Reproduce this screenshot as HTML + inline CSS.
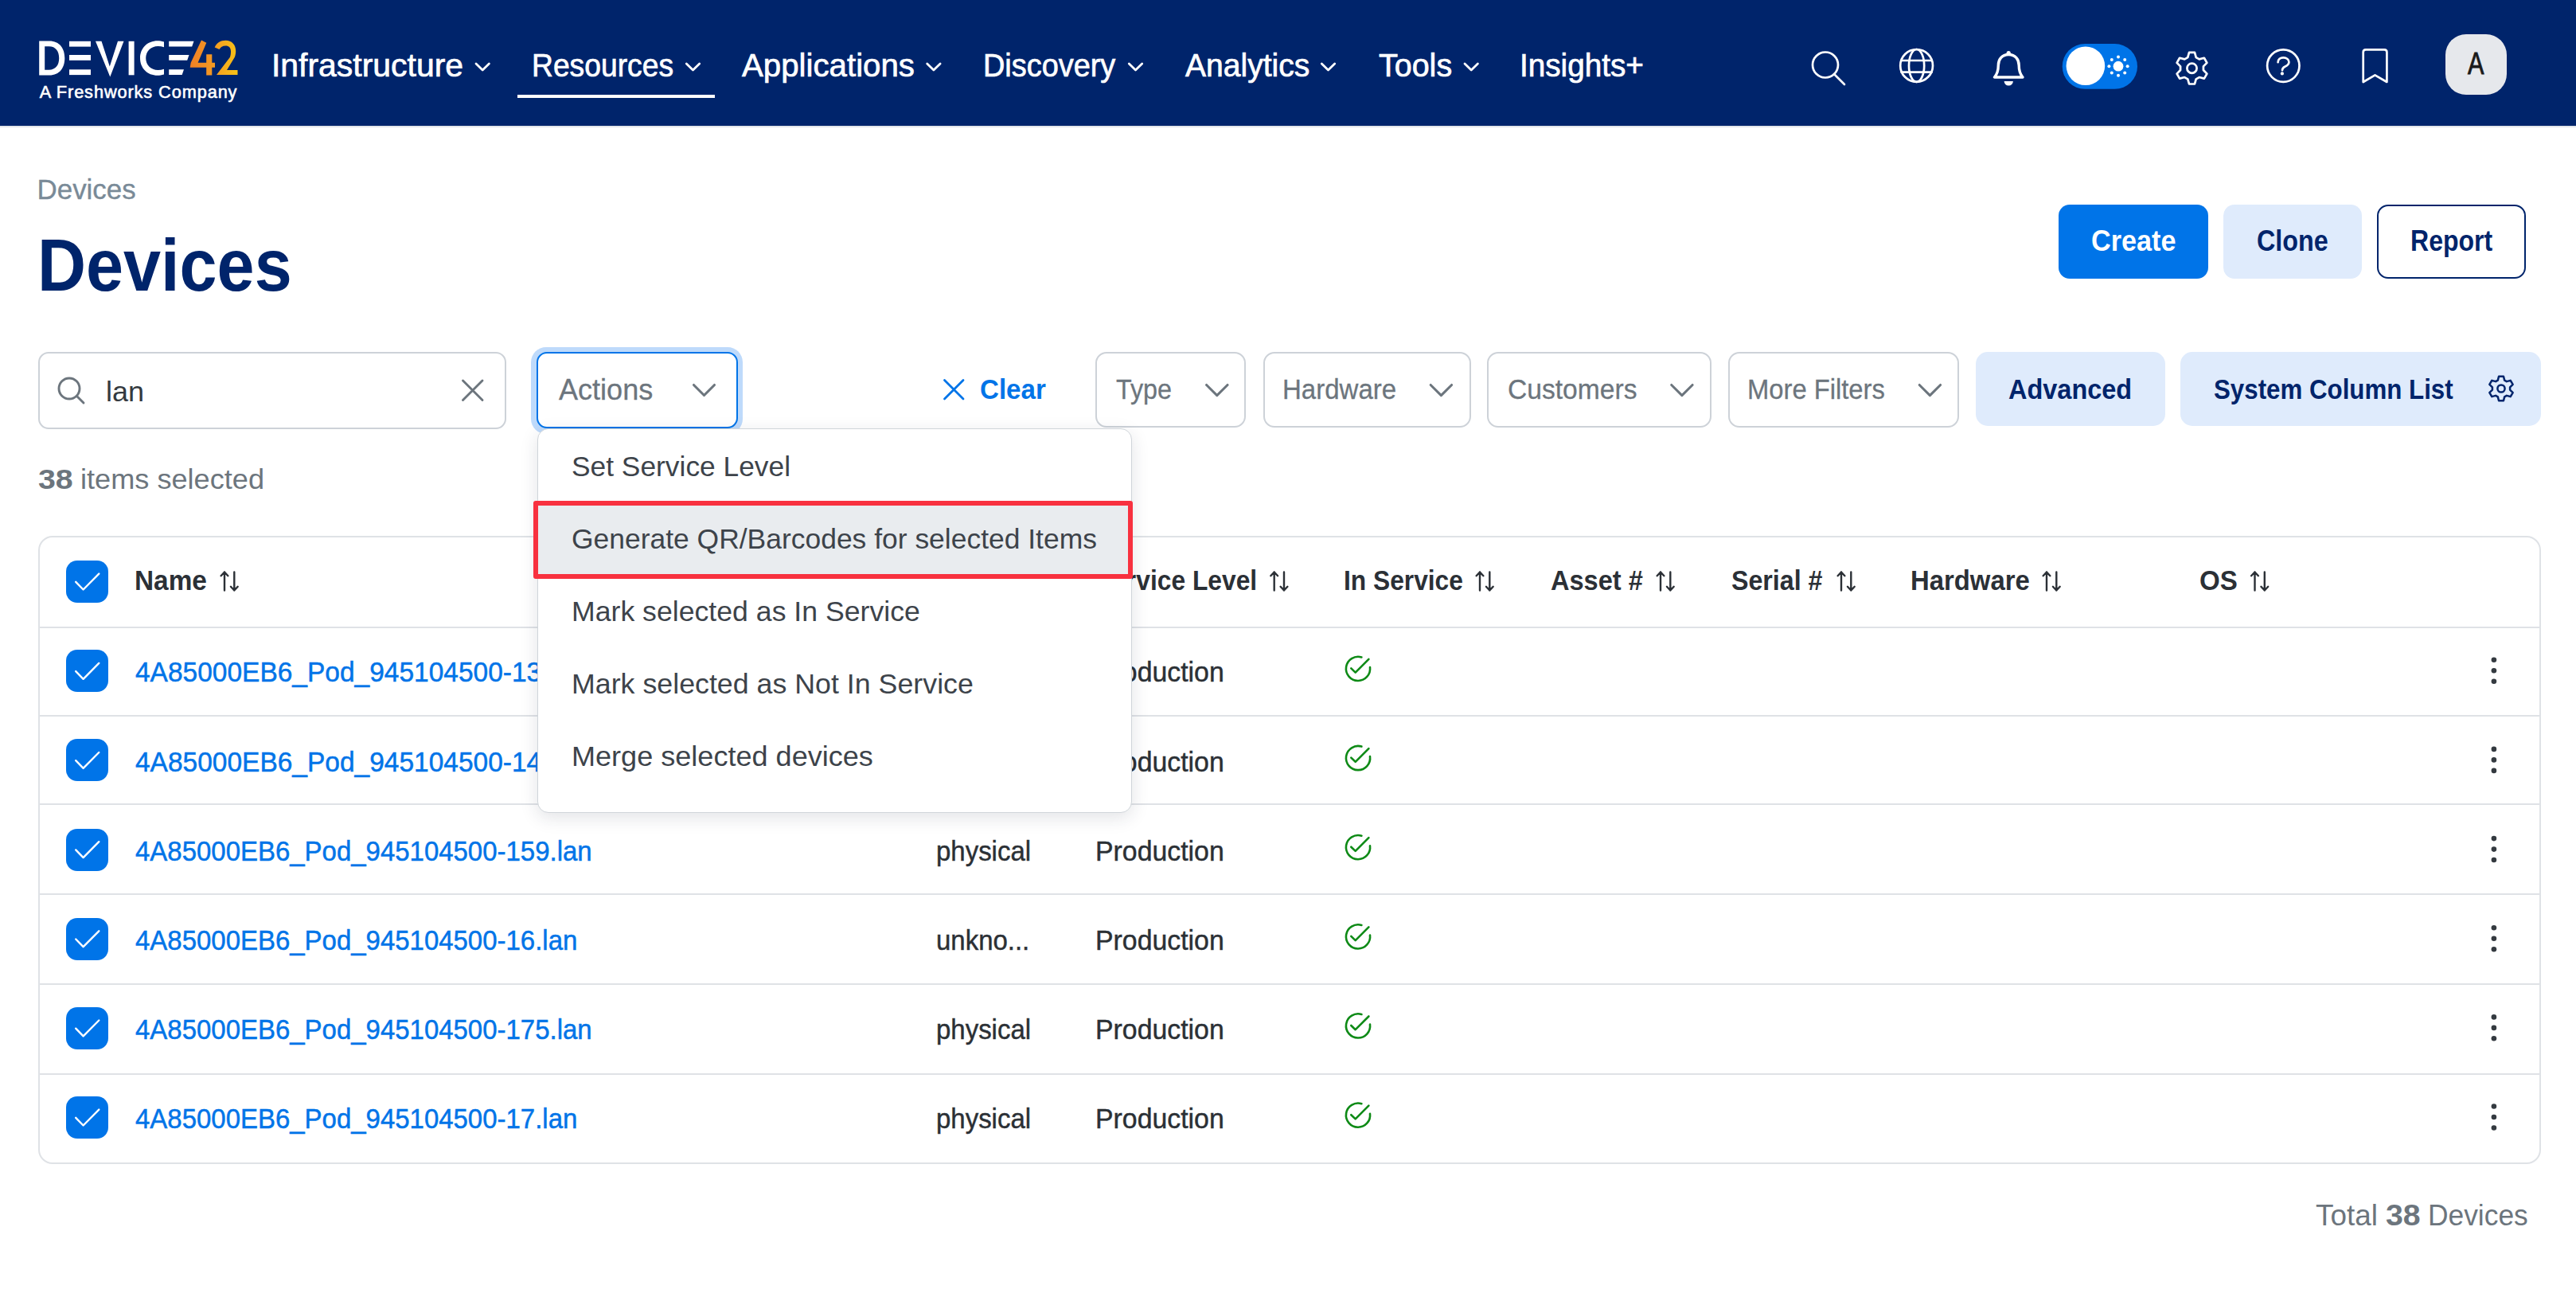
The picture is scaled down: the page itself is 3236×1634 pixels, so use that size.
<!DOCTYPE html><html><head><meta charset="utf-8"><style>
html,body{margin:0;padding:0;}
body{width:3236px;height:1634px;overflow:hidden;background:#fff;position:relative;font-family:"Liberation Sans",sans-serif;}
.t{position:absolute;white-space:nowrap;line-height:1;transform-origin:0 0;}
.abs{position:absolute;box-sizing:border-box;}
svg{position:absolute;left:0;top:0;overflow:visible}
</style></head><body>
<div class="abs" style="left:0;top:0;width:3236px;height:158px;background:#00246B"></div>
<div class="abs" style="left:0;top:158px;width:3236px;height:2px;background:#E3E6EA"></div>
<svg width="3236" height="160" viewBox="0 0 3236 160">
<defs><linearGradient id="lg42" x1="238" y1="0" x2="299" y2="0" gradientUnits="userSpaceOnUse"><stop offset="0" stop-color="#F07F26"/><stop offset="0.5" stop-color="#F49A22"/><stop offset="1" stop-color="#F8C316"/></linearGradient></defs>
<g fill="#fff">
<path d="M49.2,51.5 H62 C75,51.5 81.3,61 81.3,73 C81.3,85 75,94.5 62,94.5 H49.2 Z M56.2,58.3 V87.7 H61.5 C70,87.7 74.2,81.5 74.2,73 C74.2,64.5 70,58.3 61.5,58.3 Z" fill-rule="evenodd"/>
<rect x="87" y="51.8" width="27" height="6.8"/><rect x="87" y="69" width="27" height="6.8"/><rect x="87" y="87.3" width="27" height="6.8"/>
<path d="M120,51.8 H127.5 L137.8,83.5 L148,51.8 H155.5 L138.3,96.5 Z"/>
<rect x="161.6" y="51.8" width="7" height="42.5"/>
<path d="M206,52.5 C203,51.6 200.5,51.2 198,51.2 C185,51.2 176,60.5 176,73 C176,85.5 185,94.8 198,94.8 C200.5,94.8 203,94.4 206,93.5 V86.8 C203.5,87.6 201,88 198.5,88 C189.5,88 183.2,81.5 183.2,73 C183.2,64.5 189.5,58 198.5,58 C201,58 203.5,58.4 206,59.2 Z"/>
<path d="M212.2,51.8 H243.5 L241.2,58.6 H212.2 Z"/><path d="M212.2,69 H237.5 L235.2,75.8 H212.2 Z"/><path d="M212.2,87.3 H231 L228.7,94.1 H212.2 Z"/>
</g>
<path fill="url(#lg42)" d="M253,50.5 L259.3,53.7 L248.6,78.8 H259.2 V68.3 H266.3 V78.8 H270 V84.7 H266.3 V94.6 H259.2 V84.7 H238.7 L239.7,78.8 Z"/>
<path fill="url(#lg42)" d="M269.7,59.4 C272,54 277,50.7 283.5,50.7 C291,50.7 296.2,56 296.2,64 C296.2,67.5 295.5,70 294.7,72 L285,88.1 H298.5 V94 H272 L288.8,72 C289.6,70 290,67.5 290,64.5 C290,60 287.5,57.5 283.5,57.5 C279.5,57.5 277,59.5 275.5,62 Z"/>
</svg>
<span class="t" style="left:49.7px;top:105.1px;font-size:21.74px;font-weight:400;color:#fff;-webkit-text-stroke:0.6px #fff;letter-spacing:0.9px;">A Freshworks Company</span>
<span class="t" style="left:341.2px;top:62.1px;font-size:40.58px;font-weight:400;color:#fff;transform:scaleX(1.0083);-webkit-text-stroke:0.7px #fff;">Infrastructure</span>
<span class="t" style="left:668.1px;top:62.1px;font-size:40.58px;font-weight:400;color:#fff;transform:scaleX(0.9180);-webkit-text-stroke:0.7px #fff;">Resources</span>
<span class="t" style="left:931.5px;top:62.1px;font-size:40.58px;font-weight:400;color:#fff;transform:scaleX(0.9915);-webkit-text-stroke:0.7px #fff;">Applications</span>
<span class="t" style="left:1234.8px;top:62.1px;font-size:40.58px;font-weight:400;color:#fff;transform:scaleX(0.9334);-webkit-text-stroke:0.7px #fff;">Discovery</span>
<span class="t" style="left:1489.2px;top:62.1px;font-size:40.58px;font-weight:400;color:#fff;transform:scaleX(0.9627);-webkit-text-stroke:0.7px #fff;">Analytics</span>
<span class="t" style="left:1731.8px;top:62.1px;font-size:40.58px;font-weight:400;color:#fff;transform:scaleX(0.9723);-webkit-text-stroke:0.7px #fff;">Tools</span>
<span class="t" style="left:1909.4px;top:62.1px;font-size:40.58px;font-weight:400;color:#fff;transform:scaleX(0.9534);-webkit-text-stroke:0.7px #fff;">Insights+</span>
<svg width="3236" height="160"><g fill="none" stroke="#fff" stroke-width="2.8" stroke-linecap="round" stroke-linejoin="round"><path d="M598.0,80 L606.2,88 L614.4,80"/><path d="M862.3,80 L870.5,88 L878.7,80"/><path d="M1164.7,80 L1172.9,88 L1181.1,80"/><path d="M1418.3,80 L1426.5,88 L1434.7,80"/><path d="M1660.3,80 L1668.5,88 L1676.7,80"/><path d="M1840.0,80 L1848.2,88 L1856.4,80"/></g></svg>
<div class="abs" style="left:650px;top:119px;width:248px;height:4px;background:#fff"></div>
<svg width="3236" height="160"><g fill="none" stroke="#fff" stroke-width="2.7" stroke-linecap="round" stroke-linejoin="round">
<circle cx="2293" cy="81.5" r="16"/><path d="M2305,94 L2317,106"/>
<circle cx="2407.6" cy="82.4" r="20.4"/><ellipse cx="2407.6" cy="82.4" rx="9.6" ry="20.4"/><path d="M2388.5,76 H2426.7 M2388.5,90.6 H2426.7"/>
<path stroke-width="3.4" d="M2523.2,68.5 C2514.5,68.5 2510.3,75 2510.3,82 C2510.3,89 2508.5,93.5 2505.5,97 H2541 C2538,93.5 2536.2,89 2536.2,82 C2536.2,75 2532,68.5 2523.2,68.5 Z"/>
<path d="M2748.27,72.07 L2750.01,65.91 L2756.99,65.91 L2758.73,72.07 L2762.69,74.35 L2768.90,72.78 L2772.39,78.83 L2767.92,83.42 L2767.92,87.98 L2772.39,92.57 L2768.90,98.62 L2762.69,97.05 L2758.73,99.33 L2756.99,105.49 L2750.01,105.49 L2748.27,99.33 L2744.31,97.05 L2738.10,98.62 L2734.61,92.57 L2739.08,87.98 L2739.08,83.42 L2734.61,78.83 L2738.10,72.78 L2744.31,74.35 Z"/>
<circle cx="2753.5" cy="85.7" r="6.1"/>
<circle cx="2868.3" cy="82.6" r="20.2"/>
<path d="M2861.6,78.2 C2861.6,74.6 2864.6,72.3 2868.4,72.3 C2872.4,72.3 2875.4,74.8 2875.4,78 C2875.4,81.3 2872.8,82.6 2870.3,83.8 C2868,84.9 2867,86 2867,88.2"/>
<path d="M2968.7,65.5 Q2968.7,62.3 2971.9,62.3 H2995.2 Q2998.4,62.3 2998.4,65.5 V103 L2983.5,94.3 L2968.7,103 Z"/>
</g>
<g fill="#fff"><circle cx="2866.9" cy="92.4" r="2.1"/><circle cx="2523.2" cy="66.5" r="2.6"/><path d="M2517.6,102 H2528.9 A5.65,5.6 0 0 1 2517.6,102 Z"/></g>
<rect x="2590.7" y="55" width="94.3" height="56.8" rx="28.4" fill="#0074E8"/>
<circle cx="2619.9" cy="82.8" r="24.3" fill="#fff"/>
<g fill="#fff"><circle cx="2661" cy="83.2" r="6.4"/><circle cx="2672.60" cy="83.20" r="2"/><circle cx="2669.20" cy="91.40" r="2"/><circle cx="2661.00" cy="94.80" r="2"/><circle cx="2652.80" cy="91.40" r="2"/><circle cx="2649.40" cy="83.20" r="2"/><circle cx="2652.80" cy="75.00" r="2"/><circle cx="2661.00" cy="71.60" r="2"/><circle cx="2669.20" cy="75.00" r="2"/></g>
</svg>
<div class="abs" style="left:3072px;top:43px;width:77px;height:76px;border-radius:26px;background:#E6E8EC"></div>
<span class="t" style="left:3099.9px;top:60.3px;font-size:39.13px;font-weight:400;color:#1A1A1A;transform:scaleX(0.7822);-webkit-text-stroke:0.9px #1A1A1A;">A</span>
<span class="t" style="left:46.5px;top:220.5px;font-size:34.93px;font-weight:400;color:#798A97;-webkit-text-stroke:0.35px #798A97;">Devices</span>
<span class="t" style="left:47.4px;top:286.8px;font-size:92.32px;font-weight:700;color:#00246B;transform:scaleX(0.9159);">Devices</span>
<div class="abs" style="left:2586px;top:257px;width:188px;height:93px;border-radius:14px;background:#0074E8"></div>
<div class="abs" style="left:2793px;top:257px;width:174px;height:93px;border-radius:14px;background:#DFEBFC"></div>
<div class="abs" style="left:2986px;top:257px;width:187px;height:93px;border-radius:14px;border:2.6px solid #00246B;background:#fff"></div>
<span class="t" style="left:2626.6px;top:284.8px;font-size:36.23px;font-weight:700;color:#fff;transform:scaleX(0.9442);">Create</span>
<span class="t" style="left:2835.3px;top:284.8px;font-size:36.23px;font-weight:700;color:#00246B;transform:scaleX(0.8912);">Clone</span>
<span class="t" style="left:3027.7px;top:284.8px;font-size:36.23px;font-weight:700;color:#00246B;transform:scaleX(0.8842);">Report</span>
<div class="abs" style="left:48px;top:442px;width:588px;height:97px;border-radius:13px;border:2px solid #CDD2D8;background:#fff"></div>
<svg width="3236" height="600"><g fill="none" stroke="#6C757D" stroke-width="2.9" stroke-linecap="round"><circle cx="87" cy="488" r="13"/><path d="M96.5,497.5 L105,506"/><path d="M581.5,478 L606,502.5 M606,478 L581.5,502.5"/></g></svg>
<span class="t" style="left:132.6px;top:474.8px;font-size:34.18px;font-weight:400;color:#343A40;transform:scaleX(1.0552);">lan</span>
<div class="abs" style="left:667px;top:436px;width:266px;height:109px;border-radius:19px;background:#BEDAFB"></div>
<div class="abs" style="left:674px;top:442px;width:253px;height:96px;border-radius:13px;border:2.2px solid #0074E8;background:#fff"></div>
<span class="t" style="left:701.7px;top:471.8px;font-size:36.23px;font-weight:400;color:#6C757D;transform:scaleX(0.9958);-webkit-text-stroke:0.3px #6C757D;">Actions</span>
<span class="t" style="left:1230.7px;top:472.0px;font-size:34.78px;font-weight:700;color:#0074E8;transform:scaleX(0.9518);">Clear</span>
<div class="abs" style="left:1376px;top:442px;width:189.0px;height:95px;border-radius:14px;border:2px solid #CDD2D8;background:#fff"></div>
<span class="t" style="left:1402.2px;top:472.4px;font-size:35.51px;font-weight:400;color:#6C757D;transform:scaleX(0.9105);-webkit-text-stroke:0.3px #6C757D;">Type</span>
<div class="abs" style="left:1587px;top:442px;width:261.0px;height:95px;border-radius:14px;border:2px solid #CDD2D8;background:#fff"></div>
<span class="t" style="left:1611.2px;top:472.4px;font-size:35.51px;font-weight:400;color:#6C757D;transform:scaleX(0.9299);-webkit-text-stroke:0.3px #6C757D;">Hardware</span>
<div class="abs" style="left:1868px;top:442px;width:282.0px;height:95px;border-radius:14px;border:2px solid #CDD2D8;background:#fff"></div>
<span class="t" style="left:1894.3px;top:472.4px;font-size:35.51px;font-weight:400;color:#6C757D;transform:scaleX(0.9464);-webkit-text-stroke:0.3px #6C757D;">Customers</span>
<div class="abs" style="left:2170.6px;top:442px;width:290.4px;height:95px;border-radius:14px;border:2px solid #CDD2D8;background:#fff"></div>
<span class="t" style="left:2195.3px;top:472.4px;font-size:35.51px;font-weight:400;color:#6C757D;transform:scaleX(0.9224);-webkit-text-stroke:0.3px #6C757D;">More Filters</span>
<svg width="3236" height="600"><g fill="none" stroke="#6C757D" stroke-width="3.1" stroke-linecap="round" stroke-linejoin="round"><path d="M871.5,483.5 L884.5,496.5 L897.5,483.5"/><path d="M1515.6,483.5 L1528.8,496.7 L1542.0,483.5"/><path d="M1797.2,483.5 L1810.4,496.7 L1823.6,483.5"/><path d="M2099.7,483.5 L2112.9,496.7 L2126.1,483.5"/><path d="M2411.2,483.5 L2424.4,496.7 L2437.6,483.5"/></g><g fill="none" stroke="#0074E8" stroke-width="2.8" stroke-linecap="round"><path d="M1186.5,477.5 L1210,501 M1210,477.5 L1186.5,501"/></g></svg>
<div class="abs" style="left:2482px;top:442px;width:238px;height:93px;border-radius:15px;background:#DFEBFC"></div>
<div class="abs" style="left:2739px;top:442px;width:453px;height:93px;border-radius:15px;background:#DFEBFC"></div>
<span class="t" style="left:2523.1px;top:471.6px;font-size:35.80px;font-weight:700;color:#00246B;transform:scaleX(0.9072);">Advanced</span>
<span class="t" style="left:2780.8px;top:471.6px;font-size:35.80px;font-weight:700;color:#00246B;transform:scaleX(0.8737);">System Column List</span>
<svg width="3236" height="600"><g fill="none" stroke="#00246B" stroke-width="2.5" stroke-linejoin="round"><path d="M3137.80,477.62 L3139.04,472.78 L3144.96,472.78 L3146.20,477.62 L3148.90,479.17 L3153.70,477.83 L3156.66,482.95 L3153.09,486.44 L3153.09,489.56 L3156.66,493.05 L3153.70,498.17 L3148.90,496.83 L3146.20,498.38 L3144.96,503.22 L3139.04,503.22 L3137.80,498.38 L3135.10,496.83 L3130.30,498.17 L3127.34,493.05 L3130.91,489.56 L3130.91,486.44 L3127.34,482.95 L3130.30,477.83 L3135.10,479.17 Z"/><circle cx="3142" cy="488" r="4.6"/></g></svg>
<span class="t" style="left:48.1px;top:583.8px;font-size:35.94px;font-weight:700;color:#6C757D;transform:scaleX(1.0945);">38</span>
<span class="t" style="left:101.1px;top:583.8px;font-size:35.94px;font-weight:400;color:#6C757D;transform:scaleX(1.0061);">items selected</span>
<div class="abs" style="left:48px;top:673px;width:3143.5px;height:789px;border-radius:18px;border:2px solid #DFE2E6;background:#fff"></div>
<div class="abs" style="left:50px;top:786.6px;width:3139.5px;height:2px;background:#DFE2E6"></div>
<div class="abs" style="left:50px;top:897.8px;width:3139.5px;height:2px;background:#DFE2E6"></div>
<div class="abs" style="left:50px;top:1009.4px;width:3139.5px;height:2px;background:#DFE2E6"></div>
<div class="abs" style="left:50px;top:1122.4px;width:3139.5px;height:2px;background:#DFE2E6"></div>
<div class="abs" style="left:50px;top:1234.6px;width:3139.5px;height:2px;background:#DFE2E6"></div>
<div class="abs" style="left:50px;top:1347.5px;width:3139.5px;height:2px;background:#DFE2E6"></div>
<div class="abs" style="left:83px;top:704.0px;width:53px;height:53px;border-radius:14px;background:#0074E8"></div>
<svg width="3236" height="1634"><path d="M95.2,730.8 L104.6,740.5 L124.3,720.6" fill="none" stroke="#fff" stroke-width="2.4" stroke-linecap="round" stroke-linejoin="round"/></svg>
<span class="t" style="left:168.8px;top:712.4px;font-size:35.51px;font-weight:700;color:#2B3036;transform:scaleX(0.9404);">Name</span>
<span class="t" style="left:1177.7px;top:712.4px;font-size:35.51px;font-weight:700;color:#2B3036;transform:scaleX(0.8800);">Type</span>
<span class="t" style="left:1376.0px;top:712.4px;font-size:35.51px;font-weight:700;color:#2B3036;transform:scaleX(0.8950);">Service Level</span>
<span class="t" style="left:1687.9px;top:712.4px;font-size:35.51px;font-weight:700;color:#2B3036;transform:scaleX(0.8936);">In Service</span>
<span class="t" style="left:1947.7px;top:712.4px;font-size:35.51px;font-weight:700;color:#2B3036;transform:scaleX(0.9170);">Asset #</span>
<span class="t" style="left:2175.0px;top:712.4px;font-size:35.51px;font-weight:700;color:#2B3036;transform:scaleX(0.9058);">Serial #</span>
<span class="t" style="left:2399.8px;top:712.4px;font-size:35.51px;font-weight:700;color:#2B3036;transform:scaleX(0.9252);">Hardware</span>
<span class="t" style="left:2763.4px;top:712.4px;font-size:35.51px;font-weight:700;color:#2B3036;transform:scaleX(0.9317);">OS</span>
<svg width="3236" height="1634"><g fill="none" stroke="#2B3036" stroke-width="2.4" stroke-linecap="round" stroke-linejoin="round"><path d="M282.0,741.5 V718.5 M277.6,723.2 L282.0,718.5 L286.4,723.2 M294.3,718.5 V741.5 M289.9,736.8 L294.3,741.5 L298.7,736.8"/><path d="M1270.0,741.5 V718.5 M1265.6,723.2 L1270.0,718.5 L1274.4,723.2 M1282.3,718.5 V741.5 M1277.9,736.8 L1282.3,741.5 L1286.7,736.8"/><path d="M1600.7,741.5 V718.5 M1596.3,723.2 L1600.7,718.5 L1605.1,723.2 M1613.0,718.5 V741.5 M1608.6,736.8 L1613.0,741.5 L1617.4,736.8"/><path d="M1859.0,741.5 V718.5 M1854.6,723.2 L1859.0,718.5 L1863.4,723.2 M1871.3,718.5 V741.5 M1866.9,736.8 L1871.3,741.5 L1875.7,736.8"/><path d="M2086.0,741.5 V718.5 M2081.6,723.2 L2086.0,718.5 L2090.4,723.2 M2098.3,718.5 V741.5 M2093.9,736.8 L2098.3,741.5 L2102.7,736.8"/><path d="M2313.0,741.5 V718.5 M2308.6,723.2 L2313.0,718.5 L2317.4,723.2 M2325.3,718.5 V741.5 M2320.9,736.8 L2325.3,741.5 L2329.7,736.8"/><path d="M2571.0,741.5 V718.5 M2566.6,723.2 L2571.0,718.5 L2575.4,723.2 M2583.3,718.5 V741.5 M2578.9,736.8 L2583.3,741.5 L2587.7,736.8"/><path d="M2832.5,741.5 V718.5 M2828.1,723.2 L2832.5,718.5 L2836.9,723.2 M2844.8,718.5 V741.5 M2840.4,736.8 L2844.8,741.5 L2849.2,736.8"/></g></svg>
<div class="abs" style="left:83px;top:816.3px;width:53px;height:53px;border-radius:14px;background:#0074E8"></div>
<svg width="3236" height="1634"><path d="M95.2,843.1 L104.6,852.8 L124.3,832.9" fill="none" stroke="#fff" stroke-width="2.4" stroke-linecap="round" stroke-linejoin="round"/></svg>
<span class="t" style="left:169.6px;top:826.4px;font-size:35.07px;font-weight:400;color:#0074E8;transform:scaleX(0.9550);-webkit-text-stroke:0.5px #0074E8;">4A85000EB6_Pod_945104500-13</span>
<span class="t" style="left:1175.9px;top:826.4px;font-size:35.07px;font-weight:400;color:#2B3035;transform:scaleX(0.9400);-webkit-text-stroke:0.45px #2B3035;">physical</span>
<span class="t" style="left:1376.2px;top:826.4px;font-size:35.07px;font-weight:400;color:#2B3035;transform:scaleX(0.9650);-webkit-text-stroke:0.45px #2B3035;">Production</span>
<svg width="3236" height="1634"><g fill="#343A40"><circle cx="3132.9" cy="828.8" r="3.3"/><circle cx="3132.9" cy="842.3" r="3.3"/><circle cx="3132.9" cy="855.7" r="3.3"/></g></svg>
<div class="abs" style="left:83px;top:928.4px;width:53px;height:53px;border-radius:14px;background:#0074E8"></div>
<svg width="3236" height="1634"><path d="M95.2,955.2 L104.6,964.9 L124.3,945.0" fill="none" stroke="#fff" stroke-width="2.4" stroke-linecap="round" stroke-linejoin="round"/></svg>
<span class="t" style="left:169.6px;top:938.5px;font-size:35.07px;font-weight:400;color:#0074E8;transform:scaleX(0.9550);-webkit-text-stroke:0.5px #0074E8;">4A85000EB6_Pod_945104500-14</span>
<span class="t" style="left:1175.9px;top:938.5px;font-size:35.07px;font-weight:400;color:#2B3035;transform:scaleX(0.9400);-webkit-text-stroke:0.45px #2B3035;">physical</span>
<span class="t" style="left:1376.2px;top:938.5px;font-size:35.07px;font-weight:400;color:#2B3035;transform:scaleX(0.9650);-webkit-text-stroke:0.45px #2B3035;">Production</span>
<svg width="3236" height="1634"><g fill="#343A40"><circle cx="3132.9" cy="940.9" r="3.3"/><circle cx="3132.9" cy="954.4" r="3.3"/><circle cx="3132.9" cy="967.9" r="3.3"/></g></svg>
<div class="abs" style="left:83px;top:1040.6px;width:53px;height:53px;border-radius:14px;background:#0074E8"></div>
<svg width="3236" height="1634"><path d="M95.2,1067.4 L104.6,1077.1 L124.3,1057.2" fill="none" stroke="#fff" stroke-width="2.4" stroke-linecap="round" stroke-linejoin="round"/></svg>
<span class="t" style="left:169.6px;top:1050.7px;font-size:35.07px;font-weight:400;color:#0074E8;transform:scaleX(0.9400);-webkit-text-stroke:0.5px #0074E8;">4A85000EB6_Pod_945104500-159.lan</span>
<span class="t" style="left:1175.9px;top:1050.7px;font-size:35.07px;font-weight:400;color:#2B3035;transform:scaleX(0.9400);-webkit-text-stroke:0.45px #2B3035;">physical</span>
<span class="t" style="left:1376.2px;top:1050.7px;font-size:35.07px;font-weight:400;color:#2B3035;transform:scaleX(0.9650);-webkit-text-stroke:0.45px #2B3035;">Production</span>
<svg width="3236" height="1634"><g fill="#343A40"><circle cx="3132.9" cy="1053.1" r="3.3"/><circle cx="3132.9" cy="1066.6" r="3.3"/><circle cx="3132.9" cy="1080.0" r="3.3"/></g></svg>
<div class="abs" style="left:83px;top:1152.8px;width:53px;height:53px;border-radius:14px;background:#0074E8"></div>
<svg width="3236" height="1634"><path d="M95.2,1179.5 L104.6,1189.2 L124.3,1169.3" fill="none" stroke="#fff" stroke-width="2.4" stroke-linecap="round" stroke-linejoin="round"/></svg>
<span class="t" style="left:169.6px;top:1162.8px;font-size:35.07px;font-weight:400;color:#0074E8;transform:scaleX(0.9400);-webkit-text-stroke:0.5px #0074E8;">4A85000EB6_Pod_945104500-16.lan</span>
<span class="t" style="left:1175.9px;top:1162.8px;font-size:35.07px;font-weight:400;color:#2B3035;transform:scaleX(0.9400);-webkit-text-stroke:0.45px #2B3035;">unkno...</span>
<span class="t" style="left:1376.2px;top:1162.8px;font-size:35.07px;font-weight:400;color:#2B3035;transform:scaleX(0.9650);-webkit-text-stroke:0.45px #2B3035;">Production</span>
<svg width="3236" height="1634"><g fill="#343A40"><circle cx="3132.9" cy="1165.2" r="3.3"/><circle cx="3132.9" cy="1178.8" r="3.3"/><circle cx="3132.9" cy="1192.2" r="3.3"/></g></svg>
<div class="abs" style="left:83px;top:1264.9px;width:53px;height:53px;border-radius:14px;background:#0074E8"></div>
<svg width="3236" height="1634"><path d="M95.2,1291.7 L104.6,1301.4 L124.3,1281.5" fill="none" stroke="#fff" stroke-width="2.4" stroke-linecap="round" stroke-linejoin="round"/></svg>
<span class="t" style="left:169.6px;top:1275.0px;font-size:35.07px;font-weight:400;color:#0074E8;transform:scaleX(0.9400);-webkit-text-stroke:0.5px #0074E8;">4A85000EB6_Pod_945104500-175.lan</span>
<span class="t" style="left:1175.9px;top:1275.0px;font-size:35.07px;font-weight:400;color:#2B3035;transform:scaleX(0.9400);-webkit-text-stroke:0.45px #2B3035;">physical</span>
<span class="t" style="left:1376.2px;top:1275.0px;font-size:35.07px;font-weight:400;color:#2B3035;transform:scaleX(0.9650);-webkit-text-stroke:0.45px #2B3035;">Production</span>
<svg width="3236" height="1634"><g fill="#343A40"><circle cx="3132.9" cy="1277.4" r="3.3"/><circle cx="3132.9" cy="1290.9" r="3.3"/><circle cx="3132.9" cy="1304.3" r="3.3"/></g></svg>
<div class="abs" style="left:83px;top:1377.0px;width:53px;height:53px;border-radius:14px;background:#0074E8"></div>
<svg width="3236" height="1634"><path d="M95.2,1403.8 L104.6,1413.5 L124.3,1393.6" fill="none" stroke="#fff" stroke-width="2.4" stroke-linecap="round" stroke-linejoin="round"/></svg>
<span class="t" style="left:169.6px;top:1387.1px;font-size:35.07px;font-weight:400;color:#0074E8;transform:scaleX(0.9400);-webkit-text-stroke:0.5px #0074E8;">4A85000EB6_Pod_945104500-17.lan</span>
<span class="t" style="left:1175.9px;top:1387.1px;font-size:35.07px;font-weight:400;color:#2B3035;transform:scaleX(0.9400);-webkit-text-stroke:0.45px #2B3035;">physical</span>
<span class="t" style="left:1376.2px;top:1387.1px;font-size:35.07px;font-weight:400;color:#2B3035;transform:scaleX(0.9650);-webkit-text-stroke:0.45px #2B3035;">Production</span>
<svg width="3236" height="1634"><g fill="#343A40"><circle cx="3132.9" cy="1389.5" r="3.3"/><circle cx="3132.9" cy="1403.0" r="3.3"/><circle cx="3132.9" cy="1416.5" r="3.3"/></g></svg>
<svg width="3236" height="1634"><g fill="none" stroke="#0E8A16" stroke-width="2.6" stroke-linecap="round" stroke-linejoin="round"><path d="M1710.4,825.4 A15.1,15.1 0 1 0 1721,838.0" /><path d="M1697.3,839.4 L1702.7,844.6 L1719.4,827.9"/><path d="M1710.4,937.6 A15.1,15.1 0 1 0 1721,950.1" /><path d="M1697.3,951.6 L1702.7,956.8 L1719.4,940.1"/><path d="M1710.4,1049.7 A15.1,15.1 0 1 0 1721,1062.3" /><path d="M1697.3,1063.7 L1702.7,1068.9 L1719.4,1052.2"/><path d="M1710.4,1161.9 A15.1,15.1 0 1 0 1721,1174.5" /><path d="M1697.3,1175.9 L1702.7,1181.1 L1719.4,1164.4"/><path d="M1710.4,1274.0 A15.1,15.1 0 1 0 1721,1286.6" /><path d="M1697.3,1288.0 L1702.7,1293.2 L1719.4,1276.5"/><path d="M1710.4,1386.2 A15.1,15.1 0 1 0 1721,1398.8" /><path d="M1697.3,1400.2 L1702.7,1405.4 L1719.4,1388.7"/></g></svg>
<span class="t" style="left:2909.1px;top:1508.7px;font-size:36.38px;font-weight:400;color:#6C757D;transform:scaleX(1.0136);">Total</span>
<span class="t" style="left:2996.5px;top:1508.7px;font-size:36.38px;font-weight:700;color:#6C757D;transform:scaleX(1.0789);">38</span>
<span class="t" style="left:3049.8px;top:1508.7px;font-size:36.38px;font-weight:400;color:#6C757D;transform:scaleX(0.9719);">Devices</span>
<div class="abs" style="left:675px;top:537.5px;width:746.5px;height:483px;border-radius:14px;border:1.6px solid #D0D5DA;background:#fff;box-shadow:0 6px 22px rgba(30,40,60,0.13)"></div>
<div class="abs" style="left:670px;top:629px;width:753.3px;height:98px;border-radius:3px;border:6px solid #F8313F;background:#E9ECEF"></div>
<span class="t" style="left:718.1px;top:568.1px;font-size:35.94px;font-weight:400;color:#3D434A;transform:scaleX(0.9838);">Set Service Level</span>
<span class="t" style="left:718.0px;top:658.9px;font-size:35.94px;font-weight:400;color:#3D434A;transform:scaleX(0.9866);">Generate QR/Barcodes for selected Items</span>
<span class="t" style="left:717.9px;top:749.8px;font-size:35.94px;font-weight:400;color:#3D434A;transform:scaleX(0.9924);">Mark selected as In Service</span>
<span class="t" style="left:717.9px;top:840.8px;font-size:35.94px;font-weight:400;color:#3D434A;transform:scaleX(0.9956);">Mark selected as Not In Service</span>
<span class="t" style="left:717.9px;top:931.8px;font-size:35.94px;font-weight:400;color:#3D434A;transform:scaleX(1.0040);">Merge selected devices</span>
</body></html>
